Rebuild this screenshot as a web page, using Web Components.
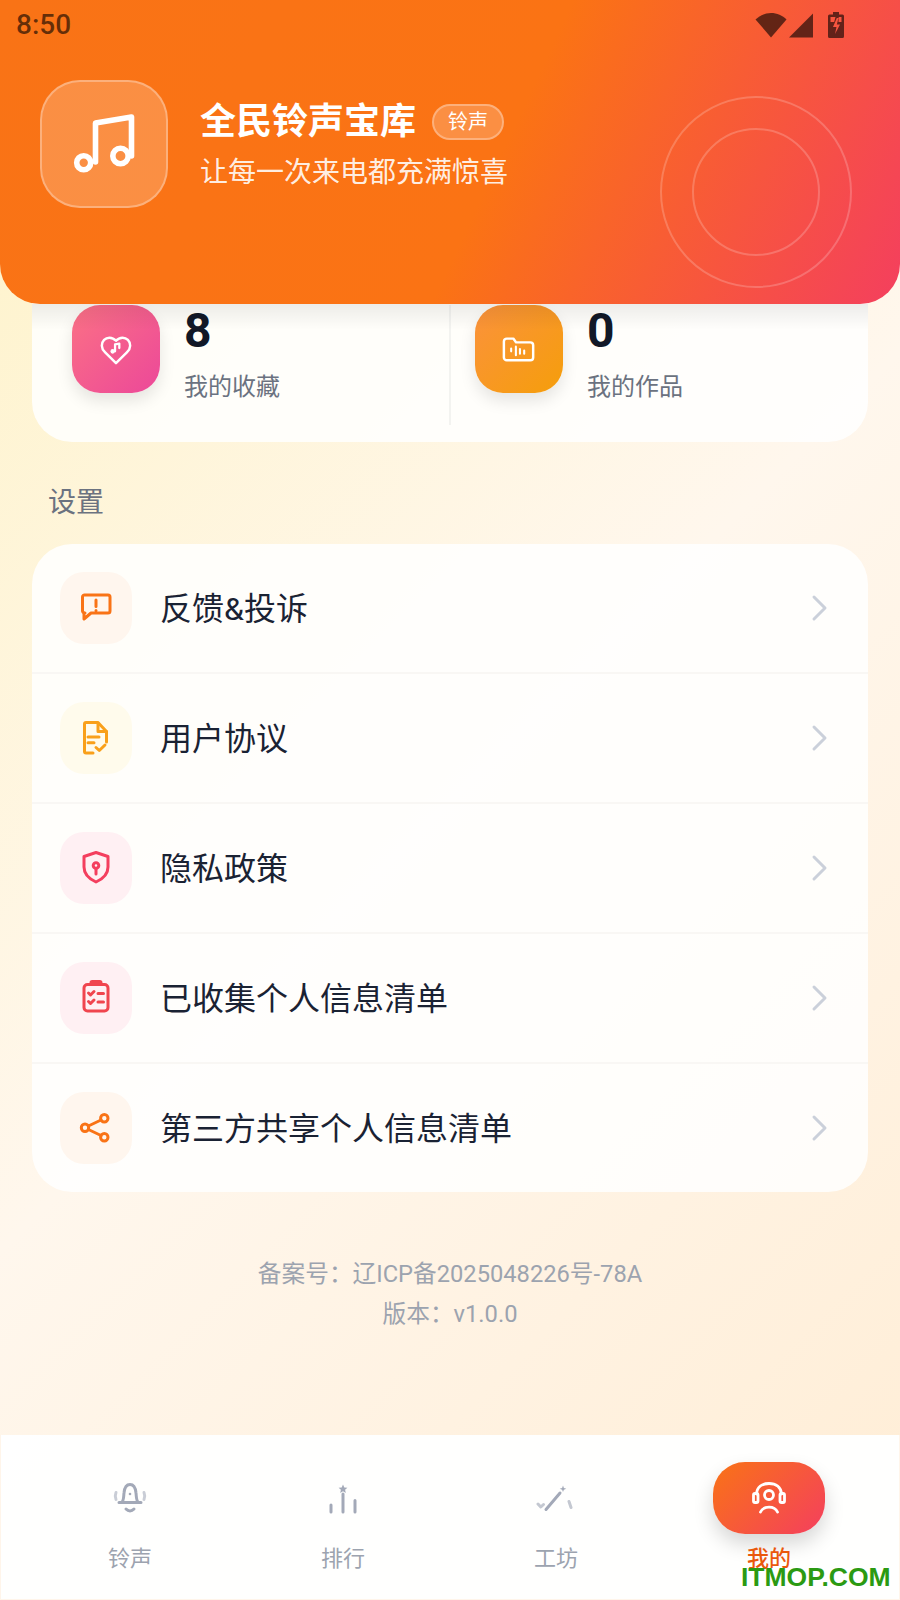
<!DOCTYPE html>
<html lang="zh">
<head>
<meta charset="utf-8">
<title>全民铃声宝库</title>
<style>
  html, body { margin: 0; padding: 0; }
  body { font-family: Roboto, "Noto Sans CJK SC", sans-serif; }
</style>
</head>
<body>
<app-page>
  <hero-header slot="hero" title-text="全民铃声宝库" tag="铃声" subtitle="让每一次来电都充满惊喜"></hero-header>
  <stat-card slot="stats">
    <stat-item value="8" label="我的收藏" tone="pink">
      <svg viewBox="0 0 36 36" fill="none" stroke="#fff" stroke-width="2.6" stroke-linecap="round" stroke-linejoin="round"><path d="M18 33 6.5 21.5C4 19 3 16.800 3 14.500 3 9.500 6.700 6 11 6c2.800 0 5 1 7 3.300C20 7 22.200 6 25 6c4.300 0 8 3.500 8 8.500 0 2.300-1 4.500-3.500 7Z"/><path stroke-width="2.400" d="M17 20.500V13l4.500-.8V17"/><circle cx="14.500" cy="20.500" r="1.800" fill="#fff" stroke-width="1.200"/></svg>
    </stat-item>
    <stat-item value="0" label="我的作品" tone="amber" divided>
      <svg viewBox="0 0 36 36" fill="none" stroke="#fff" stroke-width="2.600" stroke-linecap="round" stroke-linejoin="round"><path d="M5 7h7l3 4h15a3 3 0 0 1 3 3v13a3 3 0 0 1-3 3H5a3 3 0 0 1-3-3V10a3 3 0 0 1 3-3Z"/><path stroke-width="2.200" d="M9.700 17.500v3M14.700 15.500v9M19 18v5M23.500 19.500v3.500"/></svg>
    </stat-item>
  </stat-card>
  <section-title slot="stats">设置</section-title>
  <settings-list slot="stats">
    <settings-row label="反馈&amp;投诉" tint="#fff6ee">
      <svg viewBox="0 0 36 36" fill="none" stroke="#f97316" stroke-width="3" stroke-linecap="round" stroke-linejoin="round"><path d="M7 5h23a2 2 0 0 1 2 2v14a2 2 0 0 1-2 2H13l-7 6V23H7a2.500 2.500 0 0 1-2.500-2V7A2 2 0 0 1 7 5Z" /><path d="M18 10v6.500M18 20.500v.2"/></svg>
    </settings-row>
    <settings-row label="用户协议" tint="#fffbec">
      <svg viewBox="0 0 36 36" fill="none" stroke="#f9a01b" stroke-width="3" stroke-linecap="round" stroke-linejoin="round"><path d="M15 33H8a1.500 1.500 0 0 1-1.500-1.500V4A1.500 1.500 0 0 1 8 2.500h12l8.500 9V22"/><path d="M20 3v8.500h8.500M10 17h11M10 22.800h6M18 27.500l3.300 3L27 25"/></svg>
    </settings-row>
    <settings-row label="隐私政策" tint="#fff0f3">
      <svg viewBox="0 0 36 36" fill="none" stroke="#f43f5e" stroke-width="3" stroke-linecap="round" stroke-linejoin="round"><path d="M18 2.500 30 6.500V17c0 8-6.500 12.500-12 15C12.500 29.500 6 25 6 17V6.500Z"/><circle cx="18" cy="15.500" r="2.800"/><path d="M18 18.500V24"/></svg>
    </settings-row>
    <settings-row label="已收集个人信息清单" tint="#fff0f3">
      <svg viewBox="0 0 36 36" fill="none" stroke="#f0454e" stroke-width="3" stroke-linecap="round" stroke-linejoin="round"><rect x="6" y="4.500" width="24" height="26.500" rx="3.500"/><rect x="13" y="1.500" width="10" height="3" rx="1.200" fill="#f0454e"/><path d="M10.500 13l2 2 3.500-3.500M20 13.500h5.500M10.500 21.500l2 2 3.500-3.500M20 22h5.500"/></svg>
    </settings-row>
    <settings-row label="第三方共享个人信息清单" tint="#fff6ee">
      <svg viewBox="0 0 36 36" fill="none" stroke="#f97316" stroke-width="3" stroke-linecap="round"><circle cx="26.300" cy="8.300" r="3.700"/><circle cx="7" cy="17.700" r="3.700"/><circle cx="26.300" cy="27.300" r="3.700"/><path d="M10.400 16 23 10M10.400 19.500 23 25.500"/></svg>
    </settings-row>
  </settings-list>
  <page-footer slot="stats">
    <div>备案号：辽ICP备2025048226号-78A</div>
    <div>版本：v1.0.0</div>
  </page-footer>
  <bottom-nav slot="nav">
    <nav-item label="铃声">
      <svg viewBox="0 0 40 40" fill="none" stroke="#a3a9b8" stroke-width="3" stroke-linecap="round" stroke-linejoin="round"><path d="M9 24.500h22M11.500 24.500c2.500-2 2-5.500 2.500-9.500.5-5.500 2.500-8.500 6-8.500s5.500 3 6 8.500c.5 4 0 7.500 2.500 9.500"/><path d="M16 31c2.500 2.600 5.500 2.600 8 0"/><circle cx="20" cy="16" r="1.300" fill="#a3a9b8" stroke="none"/><path stroke="#c9cdd6" d="M6 14.500c-1 2.500-1 4.800 0 7M34 14.500c1 2.500 1 4.800 0 7"/></svg>
    </nav-item>
    <nav-item label="排行">
      <svg viewBox="0 0 40 40" fill="none" stroke="#a3a9b8" stroke-width="3" stroke-linecap="round"><path d="M8 27v7M20 16v18M32 22.500V34"/><path fill="#a3a9b8" stroke="none" d="m20 6.500 1.300 2.900 3.100.3-2.300 2.100.7 3.100-2.800-1.600-2.800 1.600.7-3.100-2.300-2.100 3.100-.3Z"/></svg>
    </nav-item>
    <nav-item label="工坊">
      <svg viewBox="0 0 40 40" fill="none" stroke="#a3a9b8" stroke-width="3" stroke-linecap="round" stroke-linejoin="round"><path d="M10 31.500 24 15"/><path fill="#a3a9b8" stroke="none" d="m27 7.500.9 2.400 2.400.9-2.400.9-.9 2.400-.9-2.400-2.400-.9 2.400-.9Z"/><path stroke="#c4c8d1" d="M2 26l2.800 3L7.500 26.500M33 23.500l2 6"/></svg>
    </nav-item>
    <nav-item label="我的" active>
      <svg viewBox="0 0 40 40" fill="none" stroke="#fff" stroke-width="2.800" stroke-linecap="round" stroke-linejoin="round"><path d="M7.500 16C8 9 13 5.500 20 5.500S32 9 32.500 16"/><rect x="4.500" y="15.500" width="4.500" height="9" rx="1.500"/><rect x="31" y="15.500" width="4.500" height="9" rx="1.500"/><circle cx="20" cy="17" r="4.500"/><path d="M11.500 34c3-6.500 14-6.500 17 0"/></svg>
    </nav-item>
  </bottom-nav>
  <water-mark slot="mark">ITMOP.COM</water-mark>
</app-page>

<script>
// small helper, every element gets an open shadow root from a string
function mount(el, html) {
  el.attachShadow({ mode: 'open' }).innerHTML = html;
}

class AppPage extends HTMLElement {
  constructor() {
    super();
    mount(this, `
      <style>
        :host {
          display: flex; flex-direction: column; position: relative;
          width: 900px; height: 1600px; overflow: hidden;
          background: linear-gradient(135deg, #fef3c7 0%, #fff7ed 50%, #ffedd5 100%);
        }
        .top { flex: none; position: relative; z-index: 2; }
        .body { flex: 1; min-height: 0; display: flex; flex-direction: column; padding: 0 32px; }
        .nav { flex: none; }
      </style>
      <div class="top"><slot name="hero"></slot></div>
      <div class="body"><slot name="stats"></slot></div>
      <div class="nav"><slot name="nav"></slot></div>
      <slot name="mark"></slot>
    `);
  }
}

class StatusBar extends HTMLElement {
  constructor() {
    super();
    mount(this, `
      <style>
        :host {
          display: flex; align-items: center; justify-content: space-between;
          height: 50px; padding: 0 56px 0 16px; color: rgba(0,0,0,.6);
        }
        .time { font: 500 28px/50px Roboto, sans-serif; }
        .icons { display: flex; align-items: center; gap: 2px; }
        svg { display: block; fill: rgba(0,0,0,.6); }
        .batt { margin-left: 13px; }
      </style>
      <span class="time">8:50</span>
      <div class="icons">
        <svg width="32" height="26" viewBox="0 0 32 26"><path d="M16 25.500 .5 7.500C4.500 3.500 10 1 16 1s11.500 2.500 15.500 6.500Z"/></svg>
        <svg width="24" height="26" viewBox="0 0 24 26"><path d="M24 1.500V25.500H0Z"/></svg>
        <svg class="batt" width="16" height="26" viewBox="0 0 16 26"><path fill-rule="evenodd" d="M5 0h6v2.500h3.500A1.500 1.500 0 0 1 16 4v20.500a1.500 1.500 0 0 1-1.500 1.500h-13A1.500 1.500 0 0 1 0 24.500V4a1.500 1.500 0 0 1 1.500-1.500H5ZM2.500 5v5h3.700L7.500 5Zm6.300 1L5 15h3.500L7 22l5-9.500H8.800L10.500 6Zm1.900-1-.2 5h3V5Z"/></svg>
      </div>
    `);
  }
}

class HeroHeader extends HTMLElement {
  constructor() {
    super();
    const title = this.getAttribute('title-text');
    const tag = this.getAttribute('tag');
    const sub = this.getAttribute('subtitle');
    mount(this, `
      <style>
        :host {
          display: block; position: relative; height: 304px; overflow: hidden;
          border-radius: 0 0 40px 40px; color: #fff;
          background: linear-gradient(115deg, #f97316 0%, #fb7314 55%, #f43f5e 100%);
        }
        .row { display: flex; align-items: flex-start; padding: 30px 0 0 40px; }
        .logo {
          flex: none; box-sizing: border-box; width: 128px; height: 128px; border-radius: 40px;
          display: flex; align-items: center; justify-content: center;
          background: rgba(255,255,255,.2); border: 2px solid rgba(255,255,255,.3);
        }
        .logo svg { width: 72px; height: 72px; }
        .text { margin-left: 32px; margin-top: 17px; }
        .line { display: flex; align-items: center; gap: 16px; }
        h1 { margin: 0; font: 700 36px/50px Roboto, "Noto Sans CJK SC", sans-serif; }
        .tag {
          box-sizing: border-box; height: 36px; padding: 0 14px; border-radius: 18px;
          font: 400 20px/32px Roboto, "Noto Sans CJK SC", sans-serif;
          background: rgba(255,255,255,.2); border: 2px solid rgba(255,255,255,.3);
        }
        p { margin: 4px 0 0; font: 400 28px/44px Roboto, "Noto Sans CJK SC", sans-serif; color: rgba(255,255,255,.9); }
        .ring { position: absolute; box-sizing: border-box; border-radius: 50%; border: 2px solid rgba(255,255,255,.2); }
        .r1 { left: 660px; top: 96px; width: 192px; height: 192px; }
        .r2 { left: 692px; top: 128px; width: 128px; height: 128px; }
      </style>
      <status-bar></status-bar>
      <div class="row">
        <div class="logo">
          <svg viewBox="0 0 72 72" fill="none" stroke="#fff" stroke-width="5.600" stroke-linecap="round" stroke-linejoin="round">
            <path d="M27.500 54V15L63.500 9V48"/><circle cx="15.700" cy="54.700" r="7"/><circle cx="52.500" cy="48" r="7.700"/>
          </svg>
        </div>
        <div class="text">
          <div class="line"><h1>${title}</h1><span class="tag">${tag}</span></div>
          <p>${sub}</p>
        </div>
      </div>
      <div class="ring r1"></div>
      <div class="ring r2"></div>
    `);
  }
}

class StatCard extends HTMLElement {
  constructor() {
    super();
    mount(this, `
      <style>
        :host {
          display: grid; grid-template-columns: 417px 1fr;
          margin-top: -40px; padding: 41px 0 17px;
          background: rgba(255,255,255,.85); border-radius: 40px;
          position: relative;
        }
        :host::before {
          content: ""; position: absolute; left: 0; right: 0; top: 40px; height: 26px;
          background: linear-gradient(180deg, rgba(0,0,0,.07), rgba(0,0,0,0)); z-index: 1; pointer-events: none;
        }
      </style>
      <slot></slot>
    `);
  }
}

class StatItem extends HTMLElement {
  constructor() {
    super();
    const tones = {
      pink: 'linear-gradient(135deg, #fb7185, #ec4899)',
      amber: 'linear-gradient(135deg, #fb923c, #f59e0b)'
    };
    const divided = this.hasAttribute('divided');
    mount(this, `
      <style>
        :host {
          display: flex; gap: 24px; height: 120px; box-sizing: border-box;
          padding-left: ${divided ? 24 : 40}px;
          ${divided ? 'border-left: 2px solid #f3f3f0;' : ''}
        }
        .icon {
          flex: none; width: 88px; height: 88px; border-radius: 28px;
          display: flex; align-items: center; justify-content: center;
          background: ${tones[this.getAttribute('tone')]};
          box-shadow: 0 8px 16px rgba(0,0,0,.1);
        }
        ::slotted(svg) { width: 34px; height: 34px; display: block; }
        .value { margin-top: 1px; font: 700 48px/50px Roboto, sans-serif; color: #111827; }
        .label { margin-top: 14px; font: 400 24px/34px Roboto, "Noto Sans CJK SC", sans-serif; color: #6b7280; }
      </style>
      <div class="icon"><slot></slot></div>
      <div>
        <div class="value">${this.getAttribute('value')}</div>
        <div class="label">${this.getAttribute('label')}</div>
      </div>
    `);
  }
}

class SectionTitle extends HTMLElement {
  constructor() {
    super();
    mount(this, `
      <style>
        :host {
          display: block; margin: 40px 0 0; padding: 0 16px; height: 62px;
          font: 400 28px/42px Roboto, "Noto Sans CJK SC", sans-serif; color: #6b7280;
        }
      </style>
      <slot></slot>
    `);
  }
}

class SettingsList extends HTMLElement {
  constructor() {
    super();
    mount(this, `
      <style>
        :host { display: block; background: rgba(255,255,255,.85); border-radius: 40px; overflow: hidden; }
      </style>
      <slot></slot>
    `);
  }
}

class SettingsRow extends HTMLElement {
  constructor() {
    super();
    mount(this, `
      <style>
        :host {
          display: flex; align-items: center; padding: 28px 35px 28px 28px;
          border-bottom: 2px solid #f9f7f4;
        }
        :host(:last-child) { border-bottom: 0; }
        .icon {
          flex: none; width: 72px; height: 72px; border-radius: 24px;
          display: flex; align-items: center; justify-content: center;
          background: ${this.getAttribute('tint')};
        }
        ::slotted(svg) { width: 36px; height: 36px; display: block; }
        .label { flex: 1; margin-left: 28px; font: 400 32px/74px Roboto, "Noto Sans CJK SC", sans-serif; height: 72px; color: #1a2233; }
        .chev { width: 28px; height: 36px; display: block; }
      </style>
      <div class="icon"><slot></slot></div>
      <div class="label">${this.getAttribute('label').replace('&', '&amp;')}</div>
      <svg class="chev" viewBox="0 0 28 36" fill="none" stroke="#cbd0da" stroke-width="3" stroke-linecap="round" stroke-linejoin="round"><path d="M9 7l11 11-11 11"/></svg>
    `);
  }
}

class PageFooter extends HTMLElement {
  constructor() {
    super();
    mount(this, `
      <style>
        :host {
          display: block; margin-top: 62px; text-align: center;
          font: 400 23.700px/40px Roboto, "Noto Sans CJK SC", sans-serif; color: #9ca3af;
        }
      </style>
      <slot></slot>
    `);
  }
}

class BottomNav extends HTMLElement {
  constructor() {
    super();
    mount(this, `
      <style>
        :host {
          display: grid; grid-template-columns: repeat(4, 1fr); box-sizing: border-box;
          height: 165px; padding: 27px 23.500px 0 22.500px;
          background: rgba(255,255,255,.96); border: 1px solid #fff5ea; border-top: 0;
        }
      </style>
      <slot></slot>
    `);
  }
}

class NavItem extends HTMLElement {
  constructor() {
    super();
    const active = this.hasAttribute('active');
    mount(this, `
      <style>
        :host { display: flex; flex-direction: column; align-items: center; }
        .pill {
          width: 112px; height: 72px; border-radius: 32px;
          display: flex; align-items: center; justify-content: center;
          ${active ? 'background: linear-gradient(135deg, #f97316, #f43f5e); box-shadow: 0 10px 20px rgba(0,0,0,.16);' : ''}
        }
        ::slotted(svg) { width: 40px; height: 40px; display: block; }
        .label {
          margin-top: 9px;
          font: ${active ? 500 : 400} 22px/32px Roboto, "Noto Sans CJK SC", sans-serif;
          color: ${active ? '#ea580c' : '#9ca3af'};
        }
      </style>
      <div class="pill"><slot></slot></div>
      <div class="label">${this.getAttribute('label')}</div>
    `);
  }
}

class WaterMark extends HTMLElement {
  constructor() {
    super();
    mount(this, `
      <style>
        :host {
          display: block; position: absolute; left: 741px; top: 1562px; z-index: 5;
          font: 700 26.500px/30px "Liberation Sans", sans-serif; color: #2b9a12;
        }
      </style>
      <slot></slot>
    `);
  }
}

customElements.define('status-bar', StatusBar);
customElements.define('app-page', AppPage);
customElements.define('hero-header', HeroHeader);
customElements.define('stat-card', StatCard);
customElements.define('stat-item', StatItem);
customElements.define('section-title', SectionTitle);
customElements.define('settings-list', SettingsList);
customElements.define('settings-row', SettingsRow);
customElements.define('page-footer', PageFooter);
customElements.define('bottom-nav', BottomNav);
customElements.define('nav-item', NavItem);
customElements.define('water-mark', WaterMark);
</script>
</body>
</html>
